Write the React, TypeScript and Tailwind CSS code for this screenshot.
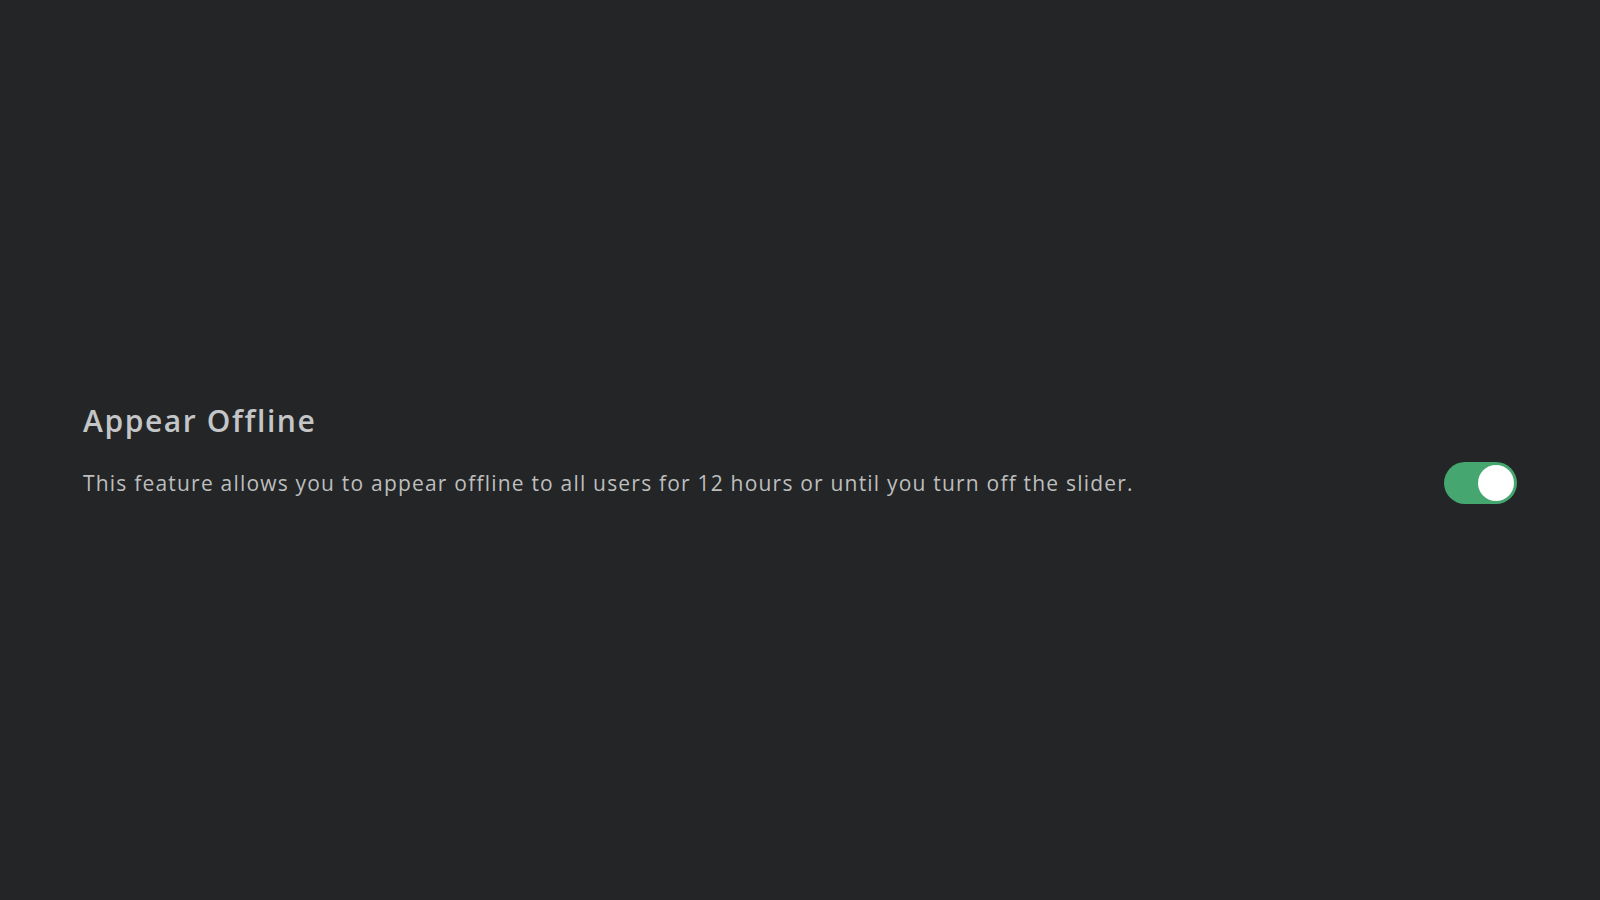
import React from "react";

export default function App() {
  return (
    <div className="w-full h-[900px] bg-[#232527] flex flex-col pt-[401px] pl-[83px] pr-[83px]" style={{ fontFamily: '"Open Sans", "Noto Sans", sans-serif' }}>
      <h1 className="text-[30px] leading-[40px] font-semibold tracking-[1.6px] text-[#c4c5c6]">Appear Offline</h1>
      <div className="flex items-center justify-between mt-[21px]">
        <p className="text-[21px] leading-[28px] tracking-[1.2px] text-[#bdbebe]">
          This feature allows you to appear offline to all users for 12 hours or until you turn off the slider.
        </p>
        <div className="w-[73px] h-[42px] rounded-full bg-[#45a76f] flex items-center justify-end pr-[3px]">
          <div className="w-[36px] h-[36px] rounded-full bg-white" />
        </div>
      </div>
    </div>
  );
}
